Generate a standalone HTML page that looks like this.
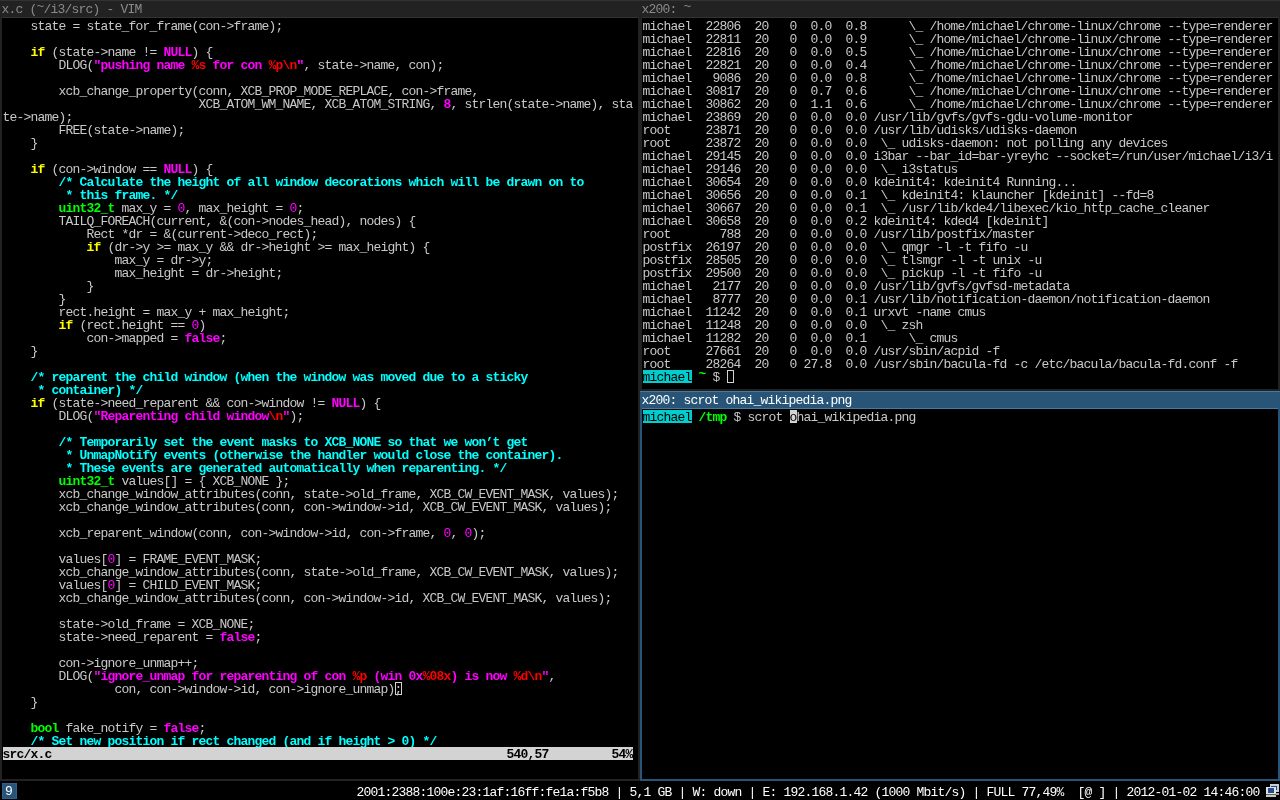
<!DOCTYPE html>
<html><head><meta charset="utf-8"><style>
*{margin:0;padding:0;box-sizing:border-box}
html,body{width:1280px;height:800px;overflow:hidden;background:#000}
body{position:relative;font-family:"Liberation Mono",monospace}
.bx{position:absolute}
.t{position:absolute;white-space:pre;font-size:13px;line-height:13px;height:13px;letter-spacing:-0.8013px;color:#c8c8c8}
.y{color:#ffff00;font-weight:bold}
.g{color:#00ff00;font-weight:bold}
.G{color:#00ff00;font-weight:bold}
.U{color:#00ff00;font-weight:bold;position:relative;top:-3px}
.W{position:relative;top:-3px}
.m{color:#ff00ff}
.M{color:#ff00ff;font-weight:bold}

.R{color:#ff0000;font-weight:bold}
.c{color:#00ffff;font-weight:bold}
.p{color:#000}
.b{color:#000}
</style></head><body>
<div id="scr" style="position:absolute;left:0;top:0;width:1280px;height:800px;background:#000;will-change:transform;overflow:hidden">
<div class="bx" style="left:0px;top:0px;width:640px;height:781px;background:#222222"></div>
<div class="bx" style="left:0px;top:0px;width:640px;height:1px;background:#333333"></div>
<div class="bx" style="left:2px;top:17px;width:636px;height:1px;background:#333333"></div>
<div class="bx" style="left:2px;top:18px;width:636px;height:761px;background:#000000"></div>
<div class="bx" style="left:640px;top:0px;width:640px;height:391px;background:#222222"></div>
<div class="bx" style="left:640px;top:0px;width:640px;height:1px;background:#333333"></div>
<div class="bx" style="left:642px;top:17px;width:636px;height:1px;background:#333333"></div>
<div class="bx" style="left:642px;top:18px;width:636px;height:371px;background:#000000"></div>
<div class="bx" style="left:640px;top:391px;width:640px;height:390px;background:#285577"></div>
<div class="bx" style="left:640px;top:391px;width:640px;height:1px;background:#4c7899"></div>
<div class="bx" style="left:642px;top:408px;width:636px;height:1px;background:#4c7899"></div>
<div class="bx" style="left:642px;top:409px;width:636px;height:370px;background:#000000"></div>
<div class="t" style="left:1.5px;top:3px;color:#8a8a8a">x.c (<span class="W">~</span>/i3/src) - VIM</div>
<div class="t" style="left:641.5px;top:3px;color:#8a8a8a">x200: <span class="W">~</span></div>
<div class="t" style="left:641.5px;top:394px;color:#ffffff">x200: scrot ohai_wikipedia.png</div>
<div class="t" style="left:2.5px;top:20px">    state = state_for_frame(con-&gt;frame);</div>
<div class="t" style="left:2.5px;top:46px">    <span class="y">if</span> (state-&gt;name != <span class="M">NULL</span>) {</div>
<div class="t" style="left:2.5px;top:59px">        DLOG(<span class="M">&quot;pushing name </span><span class="R">%s</span><span class="M"> for con </span><span class="R">%p\n</span><span class="M">&quot;</span>, state-&gt;name, con);</div>
<div class="t" style="left:2.5px;top:85px">        xcb_change_property(conn, XCB_PROP_MODE_REPLACE, con-&gt;frame,</div>
<div class="t" style="left:2.5px;top:98px">                            XCB_ATOM_WM_NAME, XCB_ATOM_STRING, <span class="M">8</span>, strlen(state-&gt;name), sta</div>
<div class="t" style="left:2.5px;top:111px">te-&gt;name);</div>
<div class="t" style="left:2.5px;top:124px">        FREE(state-&gt;name);</div>
<div class="t" style="left:2.5px;top:137px">    }</div>
<div class="t" style="left:2.5px;top:163px">    <span class="y">if</span> (con-&gt;window == <span class="M">NULL</span>) {</div>
<div class="t" style="left:2.5px;top:176px">        <span class="c">/* Calculate the height of all window decorations which will be drawn on to</span></div>
<div class="t" style="left:2.5px;top:189px"><span class="c">         * this frame. */</span></div>
<div class="t" style="left:2.5px;top:202px">        <span class="g">uint32_t</span> max_y = <span class="m">0</span>, max_height = <span class="m">0</span>;</div>
<div class="t" style="left:2.5px;top:215px">        TAILQ_FOREACH(current, &amp;(con-&gt;nodes_head), nodes) {</div>
<div class="t" style="left:2.5px;top:228px">            Rect *dr = &amp;(current-&gt;deco_rect);</div>
<div class="t" style="left:2.5px;top:241px">            <span class="y">if</span> (dr-&gt;y &gt;= max_y &amp;&amp; dr-&gt;height &gt;= max_height) {</div>
<div class="t" style="left:2.5px;top:254px">                max_y = dr-&gt;y;</div>
<div class="t" style="left:2.5px;top:267px">                max_height = dr-&gt;height;</div>
<div class="t" style="left:2.5px;top:280px">            }</div>
<div class="t" style="left:2.5px;top:293px">        }</div>
<div class="t" style="left:2.5px;top:306px">        rect.height = max_y + max_height;</div>
<div class="t" style="left:2.5px;top:319px">        <span class="y">if</span> (rect.height == <span class="m">0</span>)</div>
<div class="t" style="left:2.5px;top:332px">            con-&gt;mapped = <span class="M">false</span>;</div>
<div class="t" style="left:2.5px;top:345px">    }</div>
<div class="t" style="left:2.5px;top:371px">    <span class="c">/* reparent the child window (when the window was moved due to a sticky</span></div>
<div class="t" style="left:2.5px;top:384px"><span class="c">     * container) */</span></div>
<div class="t" style="left:2.5px;top:397px">    <span class="y">if</span> (state-&gt;need_reparent &amp;&amp; con-&gt;window != <span class="M">NULL</span>) {</div>
<div class="t" style="left:2.5px;top:410px">        DLOG(<span class="M">&quot;Reparenting child window</span><span class="R">\n</span><span class="M">&quot;</span>);</div>
<div class="t" style="left:2.5px;top:436px">        <span class="c">/* Temporarily set the event masks to XCB_NONE so that we won’t get</span></div>
<div class="t" style="left:2.5px;top:449px"><span class="c">         * UnmapNotify events (otherwise the handler would close the container).</span></div>
<div class="t" style="left:2.5px;top:462px"><span class="c">         * These events are generated automatically when reparenting. */</span></div>
<div class="t" style="left:2.5px;top:475px">        <span class="g">uint32_t</span> values[] = { XCB_NONE };</div>
<div class="t" style="left:2.5px;top:488px">        xcb_change_window_attributes(conn, state-&gt;old_frame, XCB_CW_EVENT_MASK, values);</div>
<div class="t" style="left:2.5px;top:501px">        xcb_change_window_attributes(conn, con-&gt;window-&gt;id, XCB_CW_EVENT_MASK, values);</div>
<div class="t" style="left:2.5px;top:527px">        xcb_reparent_window(conn, con-&gt;window-&gt;id, con-&gt;frame, <span class="m">0</span>, <span class="m">0</span>);</div>
<div class="t" style="left:2.5px;top:553px">        values[<span class="m">0</span>] = FRAME_EVENT_MASK;</div>
<div class="t" style="left:2.5px;top:566px">        xcb_change_window_attributes(conn, state-&gt;old_frame, XCB_CW_EVENT_MASK, values);</div>
<div class="t" style="left:2.5px;top:579px">        values[<span class="m">0</span>] = CHILD_EVENT_MASK;</div>
<div class="t" style="left:2.5px;top:592px">        xcb_change_window_attributes(conn, con-&gt;window-&gt;id, XCB_CW_EVENT_MASK, values);</div>
<div class="t" style="left:2.5px;top:618px">        state-&gt;old_frame = XCB_NONE;</div>
<div class="t" style="left:2.5px;top:631px">        state-&gt;need_reparent = <span class="M">false</span>;</div>
<div class="t" style="left:2.5px;top:657px">        con-&gt;ignore_unmap++;</div>
<div class="t" style="left:2.5px;top:670px">        DLOG(<span class="M">&quot;ignore_unmap for reparenting of con </span><span class="R">%p</span><span class="M"> (win 0x</span><span class="R">%08x</span><span class="M">) is now </span><span class="R">%d\n</span><span class="M">&quot;</span>,</div>
<div class="bx" style="left:395px;top:682px;width:7px;height:13px;border:1px solid #d3d3d3"></div>
<div class="t" style="left:2.5px;top:683px">                con, con-&gt;window-&gt;id, con-&gt;ignore_unmap)<span class="k">;</span></div>
<div class="t" style="left:2.5px;top:696px">    }</div>
<div class="t" style="left:2.5px;top:722px">    <span class="g">bool</span> fake_notify = <span class="M">false</span>;</div>
<div class="t" style="left:2.5px;top:735px">    <span class="c">/* Set new position if rect changed (and if height &gt; 0) */</span></div>
<div class="bx" style="left:3px;top:747px;width:630px;height:13px;background:#d3d3d3"></div>
<div class="t" style="left:2.5px;top:748px;color:#000;font-weight:bold">src/x.c                                                                 540,57         54%</div>
<div class="t" style="left:642.5px;top:20px">michael  22806  20   0  0.0  0.8      \_ /home/michael/chrome-linux/chrome --type=renderer</div>
<div class="t" style="left:642.5px;top:33px">michael  22811  20   0  0.0  0.9      \_ /home/michael/chrome-linux/chrome --type=renderer</div>
<div class="t" style="left:642.5px;top:46px">michael  22816  20   0  0.0  0.5      \_ /home/michael/chrome-linux/chrome --type=renderer</div>
<div class="t" style="left:642.5px;top:59px">michael  22821  20   0  0.0  0.4      \_ /home/michael/chrome-linux/chrome --type=renderer</div>
<div class="t" style="left:642.5px;top:72px">michael   9086  20   0  0.0  0.8      \_ /home/michael/chrome-linux/chrome --type=renderer</div>
<div class="t" style="left:642.5px;top:85px">michael  30817  20   0  0.7  0.6      \_ /home/michael/chrome-linux/chrome --type=renderer</div>
<div class="t" style="left:642.5px;top:98px">michael  30862  20   0  1.1  0.6      \_ /home/michael/chrome-linux/chrome --type=renderer</div>
<div class="t" style="left:642.5px;top:111px">michael  23869  20   0  0.0  0.0 /usr/lib/gvfs/gvfs-gdu-volume-monitor</div>
<div class="t" style="left:642.5px;top:124px">root     23871  20   0  0.0  0.0 /usr/lib/udisks/udisks-daemon</div>
<div class="t" style="left:642.5px;top:137px">root     23872  20   0  0.0  0.0  \_ udisks-daemon: not polling any devices</div>
<div class="t" style="left:642.5px;top:150px">michael  29145  20   0  0.0  0.0 i3bar --bar_id=bar-yreyhc --socket=/run/user/michael/i3/i</div>
<div class="t" style="left:642.5px;top:163px">michael  29146  20   0  0.0  0.0  \_ i3status</div>
<div class="t" style="left:642.5px;top:176px">michael  30654  20   0  0.0  0.0 kdeinit4: kdeinit4 Running...</div>
<div class="t" style="left:642.5px;top:189px">michael  30656  20   0  0.0  0.1  \_ kdeinit4: klauncher [kdeinit] --fd=8</div>
<div class="t" style="left:642.5px;top:202px">michael  30667  20   0  0.0  0.1  \_ /usr/lib/kde4/libexec/kio_http_cache_cleaner</div>
<div class="t" style="left:642.5px;top:215px">michael  30658  20   0  0.0  0.2 kdeinit4: kded4 [kdeinit]</div>
<div class="t" style="left:642.5px;top:228px">root       788  20   0  0.0  0.0 /usr/lib/postfix/master</div>
<div class="t" style="left:642.5px;top:241px">postfix  26197  20   0  0.0  0.0  \_ qmgr -l -t fifo -u</div>
<div class="t" style="left:642.5px;top:254px">postfix  28505  20   0  0.0  0.0  \_ tlsmgr -l -t unix -u</div>
<div class="t" style="left:642.5px;top:267px">postfix  29500  20   0  0.0  0.0  \_ pickup -l -t fifo -u</div>
<div class="t" style="left:642.5px;top:280px">michael   2177  20   0  0.0  0.0 /usr/lib/gvfs/gvfsd-metadata</div>
<div class="t" style="left:642.5px;top:293px">michael   8777  20   0  0.0  0.1 /usr/lib/notification-daemon/notification-daemon</div>
<div class="t" style="left:642.5px;top:306px">michael  11242  20   0  0.0  0.1 urxvt -name cmus</div>
<div class="t" style="left:642.5px;top:319px">michael  11248  20   0  0.0  0.0  \_ zsh</div>
<div class="t" style="left:642.5px;top:332px">michael  11282  20   0  0.0  0.1      \_ cmus</div>
<div class="t" style="left:642.5px;top:345px">root     27661  20   0  0.0  0.0 /usr/sbin/acpid -f</div>
<div class="t" style="left:642.5px;top:358px">root     28264  20   0 27.8  0.0 /usr/sbin/bacula-fd -c /etc/bacula/bacula-fd.conf -f</div>
<div class="bx" style="left:643px;top:370px;width:49px;height:13px;background:#00cdcd"></div>
<div class="bx" style="left:727px;top:370px;width:7px;height:13px;border:1px solid #d3d3d3"></div>
<div class="t" style="left:642.5px;top:371px"><span class="p">michael</span> <span class="U">~</span> $ <span class="o"> </span></div>
<div class="bx" style="left:643px;top:410px;width:49px;height:13px;background:#00cdcd"></div>
<div class="bx" style="left:790px;top:410px;width:7px;height:13px;background:#d3d3d3"></div>
<div class="t" style="left:642.5px;top:411px"><span class="p">michael</span> <span class="G">/tmp</span> $ scrot <span class="b">o</span>hai_wikipedia.png</div>
<div class="bx" style="left:2px;top:783px;width:15px;height:16px;background:#30608a"></div>
<div class="bx" style="left:3px;top:784px;width:13px;height:14px;background:#285577"></div>
<div class="t" style="left:5px;top:785px;color:#fff">9</div>
<div class="t" style="left:356.5px;top:786px;color:#fff">2001:2388:100e:23:1af:16ff:fe1a:f5b8 | 5,1 GB | W: down | E: 192.168.1.42 (1000 Mbit/s) | FULL 77,49%  [@ ] | 2012-01-02 14:46:00</div>
<div class="bx" style="left:1270px;top:784px;width:9px;height:8px;background:#c8ccd4"></div>
<div class="bx" style="left:1271px;top:786px;width:6px;height:4px;background:#1d4588"></div>
<div class="bx" style="left:1271px;top:793px;width:8px;height:2px;background:#a8a8a8"></div>
<div class="bx" style="left:1266px;top:787px;width:10px;height:7px;background:#e4e4e4"></div>
<div class="bx" style="left:1268px;top:788px;width:6px;height:5px;background:#24508e"></div>
<div class="bx" style="left:1266px;top:794px;width:10px;height:1px;background:#606060"></div>
<div class="bx" style="left:1266px;top:795px;width:10px;height:2px;background:#c8c8c0"></div>
</div>
</body></html>
